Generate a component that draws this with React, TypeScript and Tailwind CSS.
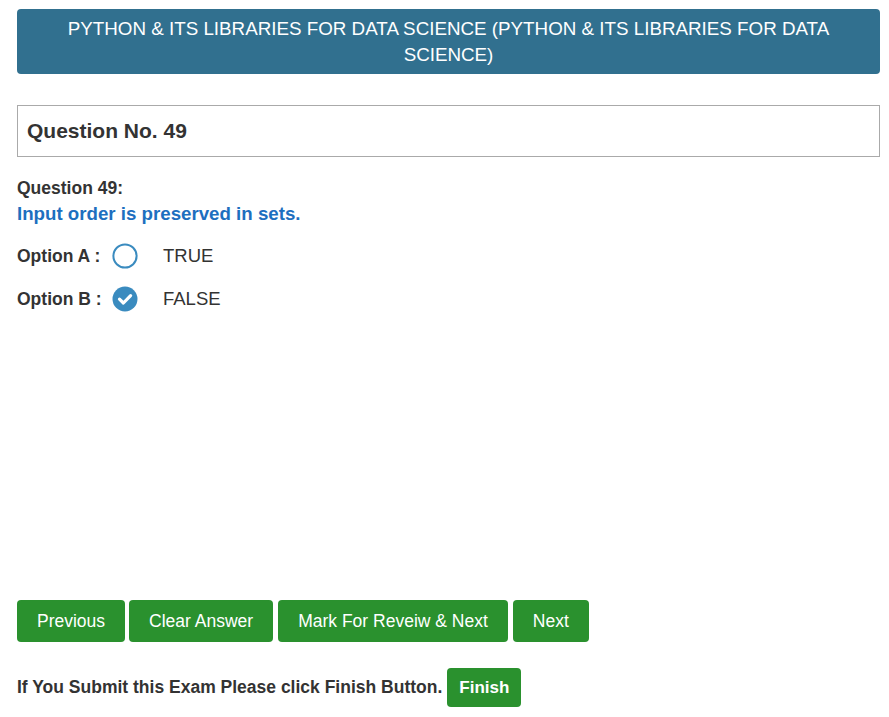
import React, { useState } from "react";

const font = { fontFamily: '"Liberation Sans", Arial, sans-serif' };

const options = [
  { key: "A", text: "TRUE" },
  { key: "B", text: "FALSE" },
];

function Radio({ checked }: { checked: boolean }) {
  return checked ? (
    <svg width="26" height="26" viewBox="0 0 26 26">
      <circle cx="13" cy="13" r="12.5" fill="#3a8bbf" />
      <path
        d="M7.5 13.2 L11.4 17 L18.6 9.6"
        fill="none"
        stroke="#fff"
        strokeWidth="3.2"
        strokeLinecap="round"
        strokeLinejoin="round"
      />
    </svg>
  ) : (
    <svg width="26" height="26" viewBox="0 0 26 26">
      <circle cx="13" cy="13" r="11.6" fill="#fff" stroke="#3a8bbf" strokeWidth="2" />
    </svg>
  );
}

function App() {
  const [answer, setAnswer] = useState("B");

  return (
    <div className="min-h-[717px] bg-white pl-[17px] pr-[9px] pt-[9px]" style={font}>
      <div className="rounded-[4px] bg-[#31708f] px-[40px] pt-[7px] pb-[6px] text-center text-[18.8px] leading-[26px] text-white">
        PYTHON &amp; ITS LIBRARIES FOR DATA SCIENCE (PYTHON &amp; ITS LIBRARIES FOR DATA SCIENCE)
      </div>

      <div className="mt-[31px] flex h-[52px] items-center border border-[#aaaaaa] px-[9px]">
        <h3 className="text-[21px] font-bold text-[#333]">Question No. 49</h3>
      </div>

      <div className="mt-[20px] text-[17.5px] font-bold leading-[22px] text-[#333]">Question 49:</div>
      <div className="mt-[2px] text-[18.7px] font-bold leading-[26px] text-[#1d6fbf]">
        Input order is preserved in sets.
      </div>

      <div className="mt-[16px] flex flex-col gap-[17px]">
        {options.map((o) => (
          <label key={o.key} className="flex h-[26px] cursor-pointer items-center" onClick={() => setAnswer(o.key)}>
            <span className="w-[95px] text-[17.5px] font-bold text-[#333]">Option {o.key} :</span>
            <Radio checked={answer === o.key} />
            <span className="ml-[25px] text-[18.5px] text-[#333]">{o.text}</span>
          </label>
        ))}
      </div>

      <div className="mt-[288px] flex gap-[5px]">
        {["Previous", "Clear Answer", "Mark For Reveiw & Next", "Next"].map((b) => (
          <button
            key={b}
            className="h-[42px] rounded-[4px] bg-[#2a912e] px-[20px] text-[17.5px] text-white first:mr-[-1px]"
          >
            {b}
          </button>
        ))}
      </div>

      <div className="mt-[26px] flex items-center">
        <span className="text-[17.5px] font-bold text-[#333]">If You Submit this Exam Please click Finish Button.</span>
        <button className="ml-[5px] h-[39px] rounded-[4px] bg-[#2a912e] px-[12px] text-[17px] font-bold text-white">
          Finish
        </button>
      </div>
    </div>
  );
}

export default App;
